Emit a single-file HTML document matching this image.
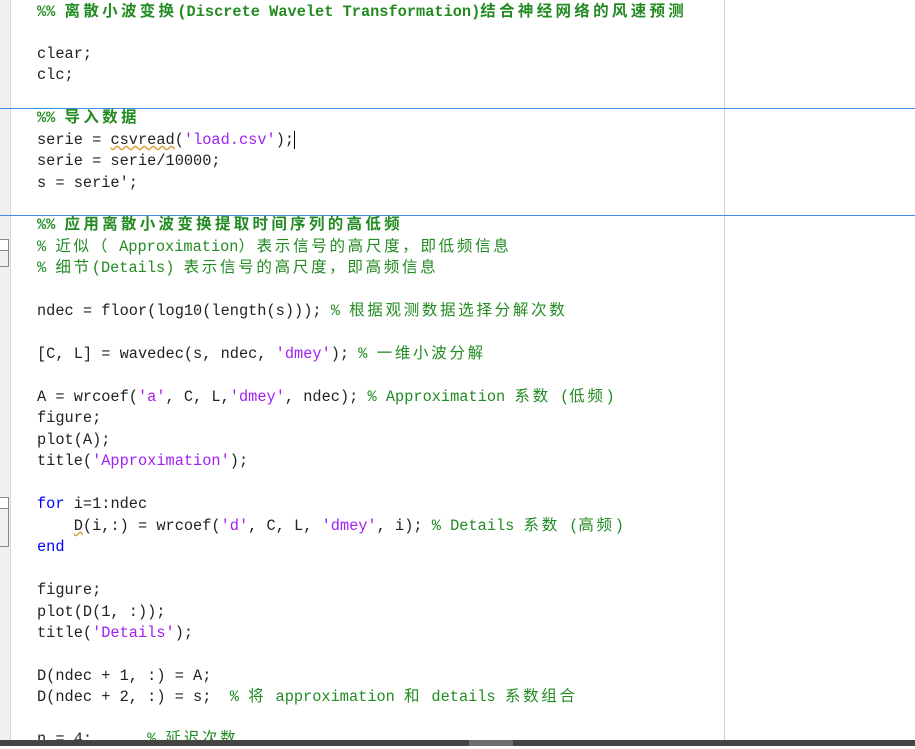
<!DOCTYPE html>
<html><head><meta charset="utf-8"><style>
body{margin:0;width:915px;height:746px;background:#fff;position:relative;overflow:hidden;font-family:"Liberation Mono","Noto Sans CJK SC",monospace;font-size:15.3px;color:#222}
.g{position:absolute;left:0;top:0;width:10px;height:740px;background:#f0f0f0;border-right:1px solid #d8d8d8}
.vl{position:absolute;left:724px;top:0;width:1px;height:740px;background:#d0d0d0}
.hl{position:absolute;left:0;width:915px;height:1px;background:#3d8ee0}
.l{position:absolute;left:37px;white-space:pre;line-height:20px;height:20px}
.l span{line-height:0}
.k{color:#0000ff}.s{color:#a020f0}.c{color:#228b22}.b{font-weight:bold;color:#228b22}
.z{font-family:"Noto Sans CJK SC",sans-serif;font-size:15.5px;letter-spacing:2.7px}
.b .z{letter-spacing:3.3px}
.bar{position:absolute;left:0;top:740px;width:915px;height:6px;background:#444}
.th{position:absolute;left:469px;top:740px;width:44px;height:6px;background:#6e6e6e}
.fold{position:absolute;left:0;width:8px;border:1px solid #888;border-left:none;background:#fff}
</style></head><body>
<div class="g"></div>
<div class="vl"></div>
<div class="hl" style="top:108px"></div>
<div class="hl" style="top:215px"></div>
<div class="fold" style="top:239px;height:10px"></div>
<div style="position:absolute;left:0;top:250px;width:8px;height:16px;border-right:1px solid #888;border-bottom:1px solid #888"></div>
<div class="fold" style="top:497px;height:10px"></div>
<div style="position:absolute;left:0;top:508px;width:8px;height:38px;border-right:1px solid #888;border-bottom:1px solid #888"></div>

<div class="l b" style="top:2px">%% <span class="z">离散小波变换</span>(Discrete Wavelet Transformation)<span class="z">结合神经网络的风速预测</span></div>
<div class="l" style="top:44px">clear;</div>
<div class="l" style="top:65px">clc;</div>
<div class="l b" style="top:108px">%% <span class="z">导入数据</span></div>
<div class="l" style="top:130px">serie = <span style="text-decoration:underline wavy #e0a040">csvread</span>(<span class="s">'load.csv'</span>);<span style="border-left:1px solid #000"></span></div>
<div class="l" style="top:151px">serie = serie/10000;</div>
<div class="l" style="top:173px">s = serie';</div>
<div class="l b" style="top:215px">%% <span class="z">应用离散小波变换提取时间序列的高低频</span></div>
<div class="l c" style="top:237px">% <span class="z">近似（</span> Approximation<span class="z">）表示信号的高尺度，即低频信息</span></div>
<div class="l c" style="top:258px">% <span class="z">细节</span>(Details) <span class="z">表示信号的高尺度，即高频信息</span></div>
<div class="l" style="top:301px">ndec = floor(log10(length(s))); <span class="c">% <span class="z">根据观测数据选择分解次数</span></span></div>
<div class="l" style="top:344px">[C, L] = wavedec(s, ndec, <span class="s">'dmey'</span>); <span class="c">% <span class="z">一维小波分解</span></span></div>
<div class="l" style="top:387px">A = wrcoef(<span class="s">'a'</span>, C, L,<span class="s">'dmey'</span>, ndec); <span class="c">% Approximation <span class="z">系数</span> (<span class="z">低频</span>)</span></div>
<div class="l" style="top:408px">figure;</div>
<div class="l" style="top:430px">plot(A);</div>
<div class="l" style="top:451px">title(<span class="s">'Approximation'</span>);</div>
<div class="l" style="top:494px"><span class="k">for</span> i=1:ndec</div>
<div class="l" style="top:516px">    <span style="text-decoration:underline wavy #e0a040">D</span>(i,:) = wrcoef(<span class="s">'d'</span>, C, L, <span class="s">'dmey'</span>, i); <span class="c">% Details <span class="z">系数</span> (<span class="z">高频</span>)</span></div>
<div class="l" style="top:537px"><span class="k">end</span></div>
<div class="l" style="top:580px">figure;</div>
<div class="l" style="top:602px">plot(D(1, :));</div>
<div class="l" style="top:623px">title(<span class="s">'Details'</span>);</div>
<div class="l" style="top:666px">D(ndec + 1, :) = A;</div>
<div class="l" style="top:687px">D(ndec + 2, :) = s;  <span class="c">% <span class="z">将</span> approximation <span class="z">和</span> details <span class="z">系数组合</span></span></div>
<div class="l" style="top:729px">n = 4;      <span class="c">% <span class="z">延迟次数</span></span></div>
<div class="bar"></div><div class="th"></div>
</body></html>
